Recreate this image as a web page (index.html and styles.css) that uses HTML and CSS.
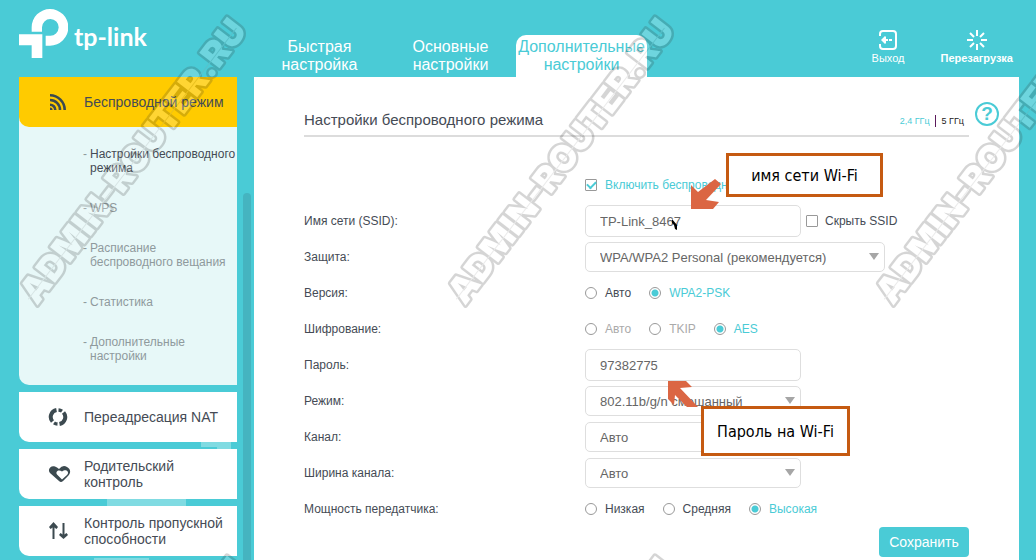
FILE: index.html
```html
<!DOCTYPE html>
<html lang="ru">
<head>
    <meta charset="UTF-8">
    <meta name="viewport" content="width=device-width, initial-scale=1.0">
    <title>TP-Link</title>
    <link rel="stylesheet" href="styles.css">
</head>
<body>
    <header class="header">
        <a class="logo" href="#">
            <svg class="logo-mark" viewBox="57 27 147 147" aria-hidden="true">
                <path d="M95 95V82A55 55 0 1 1 150 137H137V107H150A25 25 0 1 0 126 82V95Z"/>
                <path d="M57 103H127V174H95V136H57Z"/>
            </svg>
            <span class="logo-text">tp-link</span>
        </a>
        <nav class="tabs">
            <a class="tab" href="#">Быстрая настройка</a>
            <a class="tab" href="#">Основные настройки</a>
            <a class="tab active" href="#">Дополнительные настройки</a>
        </nav>
        <div class="actions">
            <button class="action" type="button">
                <svg viewBox="0 0 20 20" aria-hidden="true">
                    <path d="M2 6V4Q2 1 5 1H15Q18 1 18 4V16Q18 19 15 19H5Q2 19 2 16V14" fill="none" stroke="#fff" stroke-width="2"/>
                    <path d="M7 6L3 10L7 14L8 13V11H10V9H8V7ZM11 9H14V11H11Z" fill="#fff"/>
                </svg>
                Выход
            </button>
            <button class="action bold" type="button">
                <svg viewBox="0 0 20 20" aria-hidden="true">
                    <path d="M10 0V6M10 14V20M0 10H6M14 10H20M3 3L7 7M13 13L17 17M17 3L13 7M7 13L3 17" stroke="#fff" stroke-width="2"/>
                </svg>
                Перезагрузка
            </button>
        </div>
    </header>

    <div class="layout">
        <nav class="sidebar">
            <div class="menu-group">
                <a class="menu-item active" href="#">
                    <svg viewBox="0 0 20 20" aria-hidden="true">
                        <g fill="none" stroke="#3c4a50" stroke-width="2.6">
                            <path d="M2 3.3A14.7 14.7 0 0 1 16.7 18"/>
                            <path d="M2 8A10 10 0 0 1 12 18"/>
                            <path d="M2 12.7A5.3 5.3 0 0 1 7.3 18"/>
                        </g>
                        <path d="M2 15.4A2.6 2.6 0 0 1 4.6 18H2Z" fill="#3c4a50"/>
                    </svg>
                    <span>Беспроводной режим</span>
                </a>
                <ul class="submenu">
                    <li><a class="current" href="#">Настройки беспроводного режима</a></li>
                    <li><a href="#">WPS</a></li>
                    <li><a href="#">Расписание беспроводного вещания</a></li>
                    <li><a href="#">Статистика</a></li>
                    <li><a href="#">Дополнительные настройки</a></li>
                </ul>
            </div>
            <a class="menu-item" href="#">
                <svg viewBox="0 0 20 20" aria-hidden="true">
                    <g fill="none" stroke="#3c4a50" stroke-width="4">
                        <path d="M8.500 3A7 7 0 0 0 4.5 14.5"/>
                        <path d="M11.500 17A7 7 0 0 0 15.5 5.5"/>
                        <path d="M10.500 3A7 7 0 0 1 14 4.2M9.500 17A7 7 0 0 1 6 15.8" stroke-width="3.4"/>
                    </g>
                </svg>
                <span>Переадресация NAT</span>
            </a>
            <a class="menu-item" href="#">
                <svg class="wide" viewBox="0 0 24 20" aria-hidden="true">
                    <path d="M11 17L2 9C-1 5 3 1 7 2.500Q9 3 11 5Q15 0 19 3C23 5 23 9 20 12L15 17Q13 19 11 17Z" fill="#3c4a50"/>
                    <path d="M14 15.500L9 10.500C7 7 11 5 14 7.500C18 4 22 8 19 11Z" fill="#fff"/>
                </svg>
                <span>Родительский контроль</span>
            </a>
            <a class="menu-item" href="#">
                <svg viewBox="0 0 20 20" aria-hidden="true">
                    <path d="M5.500 18V5M15.500 2V15" stroke="#3c4a50" stroke-width="2"/>
                    <path d="M1 6L5.500 1L10 6L8.500 8L5.500 6L2.500 8ZM11 14L15.500 18L20 14L18.500 12L15.500 14L12.500 12Z" fill="#3c4a50"/>
                </svg>
                <span>Контроль пропускной способности</span>
            </a>
        </nav>
        <div class="scroll"><div class="thumb"></div></div>

        <main class="panel">
            <section class="content">
                <div class="heading">
                    <h1>Настройки беспроводного режима</h1>
                    <div class="bands">
                        <a class="band current" href="#">2,4 ГГц</a>
                        <a class="band" href="#">5 ГГц</a>
                    </div>
                </div>
                <form class="form">
                    <div class="row">
                        <span class="name"></span>
                        <label class="option on"><input type="checkbox" checked>Включить беспроводн</label>
                    </div>
                    <div class="row">
                        <label class="name" for="ssid">Имя сети (SSID):</label>
                        <input class="text" id="ssid" type="text" value="TP-Link_8467">
                        <label class="option side"><input type="checkbox">Скрыть SSID</label>
                    </div>
                    <div class="row">
                        <label class="name" for="security">Защита:</label>
                        <span class="select long">
                            <select id="security"><option>WPA/WPA2 Personal (рекомендуется)</option></select>
                        </span>
                    </div>
                    <div class="row" role="radiogroup" aria-labelledby="version">
                        <span class="name" id="version">Версия:</span>
                        <label class="option"><input type="radio" name="version">Авто</label>
                        <label class="option on"><input type="radio" name="version" checked>WPA2-PSK</label>
                    </div>
                    <div class="row" role="radiogroup" aria-labelledby="cipher">
                        <span class="name" id="cipher">Шифрование:</span>
                        <label class="option off"><input type="radio" name="cipher" disabled>Авто</label>
                        <label class="option off"><input type="radio" name="cipher" disabled>TKIP</label>
                        <label class="option on"><input type="radio" name="cipher" checked>AES</label>
                    </div>
                    <div class="row">
                        <label class="name" for="password">Пароль:</label>
                        <input class="text" id="password" type="text" value="97382775">
                    </div>
                    <div class="row">
                        <label class="name" for="mode">Режим:</label>
                        <span class="select"><select id="mode"><option>802.11b/g/n смешанный</option></select></span>
                    </div>
                    <div class="row">
                        <label class="name" for="channel">Канал:</label>
                        <span class="select"><select id="channel"><option>Авто</option></select></span>
                    </div>
                    <div class="row">
                        <label class="name" for="width">Ширина канала:</label>
                        <span class="select"><select id="width"><option>Авто</option></select></span>
                    </div>
                    <div class="row" role="radiogroup" aria-labelledby="power">
                        <span class="name" id="power">Мощность передатчика:</span>
                        <label class="option"><input type="radio" name="power">Низкая</label>
                        <label class="option"><input type="radio" name="power">Средняя</label>
                        <label class="option on"><input type="radio" name="power" checked>Высокая</label>
                    </div>
                    <button class="save" type="button">Сохранить</button>

                    <!-- подсказки поверх формы -->
                    <svg class="pointer" viewBox="0 0 6 12" aria-hidden="true"><path d="M0 0L5 6V11L3 10L2 6L0 4Z"/></svg>
                    <svg class="arrow arrow-ssid" viewBox="0 0 30 30" aria-hidden="true"><path d="M0 30V6L7 13L24 0L30 5L15 21L28 23L22 30Z"/></svg>
                    <svg class="arrow arrow-pass" viewBox="0 0 30 30" aria-hidden="true"><path d="M0 0H18L24 6L12 7L30 26H19L7 14L6 24L0 18Z"/></svg>
                    <div class="note note-ssid">имя сети Wi-Fi</div>
                    <div class="note note-pass">Пароль на Wi-Fi</div>
                </form>
            </section>
            <button class="help" type="button" aria-label="Помощь">?</button>
        </main>
    </div>

    <svg class="watermark" aria-hidden="true">
        <defs>
            <pattern id="mark" width="428" height="539" patternUnits="userSpaceOnUse">
                <g transform="translate(37 306) rotate(-52.500)">
                    <text class="mark-text" x="0" y="0">ADMIN-ROUTER.RU</text>
                    <path class="mark-line" d="M0 -11H342"/>
                </g>
            </pattern>
        </defs>
        <rect width="100%" height="100%" fill="url(#mark)"/>
    </svg>
</body>
</html>
```

FILE: styles.css
```css
* {
    box-sizing: border-box;
}
body {
    margin: 0;
    min-height: 100vh;
    display: flex;
    flex-direction: column;
    position: relative;
    font-family: "Liberation Sans", Arial, sans-serif;
    font-size: 12px;
    color: #454b55;
    background-color: #4acbd6;
    /* светлые блоки на фоне под меню */
    background-image:
        linear-gradient(#80dbe2, #80dbe2),
        linear-gradient(#80dbe2, #80dbe2),
        linear-gradient(#80dbe2, #80dbe2),
        linear-gradient(#80dbe2, #80dbe2);
    background-repeat: no-repeat;
    background-position: 201px 441px, 217px 447px, 107px 499px, 94px 558px;
    background-size: 30px 6px, 14px 2px, 79px 8px, 55px 2px;
}
a {
    color: inherit;
    text-decoration: none;
}
button, input, select {
    font-family: inherit;
    font-size: inherit;
    color: inherit;
    margin: 0;
}
button {
    border: none;
    padding: 0;
    background: none;
    cursor: pointer;
}

/* header */
.header {
    height: 77px;
    display: flex;
    color: #fff;
}
.logo {
    width: 254px;
    padding: 9px 0 0 19px;
    display: flex;
    gap: 6px;
}
.logo-mark {
    width: 49px;
    height: 49px;
    fill: #fff;
}
.logo-text {
    font-family: Lato, sans-serif;
    font-size: 25px;
    font-weight: bold;
    line-height: 54px;
}
.tabs {
    display: flex;
    align-items: flex-end;
}
.tab {
    width: 131px;
    height: 42px;
    padding-top: 3px;
    font-size: 16px;
    line-height: 18px;
    text-align: center;
}
.tab.active {
    color: #4acbd6;
    background: #fff;
    border-radius: 10px 10px 0 0;
}
.actions {
    margin-left: auto;
    padding: 30px 23px 0 0;
    display: flex;
    align-items: flex-start;
    gap: 36px;
}
.action {
    display: flex;
    flex-direction: column;
    align-items: center;
    gap: 2px;
    font-size: 11px;
    line-height: 13px;
}
.action svg {
    width: 20px;
    height: 20px;
}
.bold {
    font-weight: bold;
}

/* sidebar */
.layout {
    flex: 1;
    display: flex;
}
.sidebar {
    width: 218px;
    margin-left: 19px;
    display: flex;
    flex-direction: column;
    gap: 7px;
}
.menu-group {
    background: #e7f8f8;
    border-radius: 0 0 0 10px;
}
.menu-item {
    height: 50px;
    padding: 0 10px 0 29px;
    display: grid;
    grid-template-columns: 20px 1fr;
    align-items: center;
    gap: 16px;
    font-size: 14px;
    line-height: 16px;
    background: #fff;
    border-radius: 0 0 0 10px;
}
.menu-item.active {
    background: #ffcb00;
}
.menu-item svg {
    width: 20px;
    height: 20px;
}
.menu-item svg.wide {
    width: 24px;
}
.submenu {
    margin: 0;
    padding: 20px 0 22px 71px;
    display: flex;
    flex-direction: column;
    gap: 26px;
    list-style: none;
    font-size: 12px;
    line-height: 14px;
    color: #8f9a9d;
}
.submenu li {
    position: relative;
}
.submenu li::before {
    content: "-";
    position: absolute;
    left: -7px;
}
.submenu .current {
    color: #454b55;
}
.scroll {
    width: 17px;
    padding: 116px 3px 0 6px;
    display: flex;
}
.thumb {
    flex: 1;
    background: #45b4c0;
    border-radius: 4px 4px 0 0;
}

/* panel */
.panel {
    flex: 1;
    margin-right: 17px;
    padding: 25px 20px 3px 50px;
    display: grid;
    grid-template-columns: 1fr 24px;
    gap: 6px;
    align-items: start;
    background: #fff;
}
.heading {
    height: 35px;
    padding: 8px 5px 0 0;
    display: flex;
    justify-content: space-between;
    align-items: flex-start;
    border-bottom: 2px solid #dcdcdc;
}
h1 {
    margin: 0;
    font-size: 15px;
    font-weight: normal;
    line-height: 20px;
}
.bands {
    padding-top: 5px;
    display: flex;
    font-size: 9px;
    line-height: 12px;
}
.band {
    color: #222;
}
.band.current {
    color: #4acbd6;
    padding-right: 5px;
    margin-right: 6px;
    border-right: 1px solid #5c1a5c;
}
.help {
    width: 24px;
    height: 24px;
    border: 2px solid #4acbd6;
    border-radius: 50%;
    color: #4acbd6;
    font-size: 19px;
    font-weight: bold;
    line-height: 20px;
}

/* form */
.form {
    position: relative;
    padding-top: 30px;
    display: flex;
    flex-direction: column;
}
.row {
    height: 36px;
    display: flex;
    align-items: center;
}
.name {
    width: 281px;
}
.text, select {
    height: 32px;
    padding: 0 14px;
    border: 1px solid #dedede;
    border-radius: 5px;
    background: #fff;
    color: #666;
    font-size: 13px;
}
.text {
    width: 216px;
}
.select {
    width: 216px;
    display: flex;
    position: relative;
}
.select.long {
    width: 300px;
}
select {
    width: 100%;
    height: 30px;
    appearance: none;
}
.select::after {
    content: "";
    position: absolute;
    top: 11px;
    right: 6px;
    border: 5px solid transparent;
    border-top: 7px solid #a6a6a6;
    border-bottom: none;
    pointer-events: none;
}
.option {
    margin-right: 18px;
    display: flex;
    align-items: center;
    gap: 8px;
}
.option.side {
    margin-left: 5px;
    gap: 7px;
}
.option.on {
    color: #4acbd6;
}
.option.off {
    color: #aaa;
}
.option input {
    appearance: none;
    width: 12px;
    height: 12px;
    border: 1px solid #999;
    background: #fff;
    display: grid;
    place-items: center;
}
.option input[type="radio"] {
    border-radius: 50%;
}
.option input[type="radio"]:checked {
    background: radial-gradient(circle, #4acbd6 3px, #fff 4px);
}
.option input[type="checkbox"] {
    border-radius: 1px;
}
.option input[type="checkbox"]:checked::before {
    content: "";
    width: 7px;
    height: 4px;
    margin-bottom: 2px;
    border: solid #4acbd6;
    border-width: 0 0 2px 2px;
    transform: rotate(-45deg);
}
.save {
    align-self: flex-end;
    width: 90px;
    height: 30px;
    border-radius: 4px;
    background: #4acbd6;
    color: #fff;
    font-size: 14px;
}

/* notes */
.note {
    position: absolute;
    display: grid;
    place-items: center;
    border: 3px solid #c55a11;
    background: #fff;
    color: #000;
    font-family: "DejaVu Sans Condensed", "Noto Sans", sans-serif;
    font-size: 16px;
}
.note-ssid {
    left: 422px;
    top: 16px;
    width: 157px;
    height: 44px;
}
.note-pass {
    left: 397px;
    top: 269px;
    width: 149px;
    height: 50px;
}
.arrow {
    position: absolute;
    width: 30px;
    height: 30px;
    fill: #db6643;
}
.arrow-ssid {
    left: 387px;
    top: 42px;
}
.arrow-pass {
    left: 364px;
    top: 244px;
}
.pointer {
    position: absolute;
    left: 368px;
    top: 82px;
    width: 6px;
    height: 12px;
}

/* watermark */
.watermark {
    position: absolute;
    top: 0;
    left: 0;
    width: 100%;
    height: 100%;
    pointer-events: none;
    opacity: 0.2;
}
.mark-text {
    font-family: Inter, sans-serif;
    font-size: 35px;
    font-weight: 900;
    fill: #fff;
    stroke: #333;
    stroke-width: 5px;
    stroke-linejoin: round;
    paint-order: stroke;
}
.mark-line {
    stroke: #999;
    stroke-width: 1px;
}
```
